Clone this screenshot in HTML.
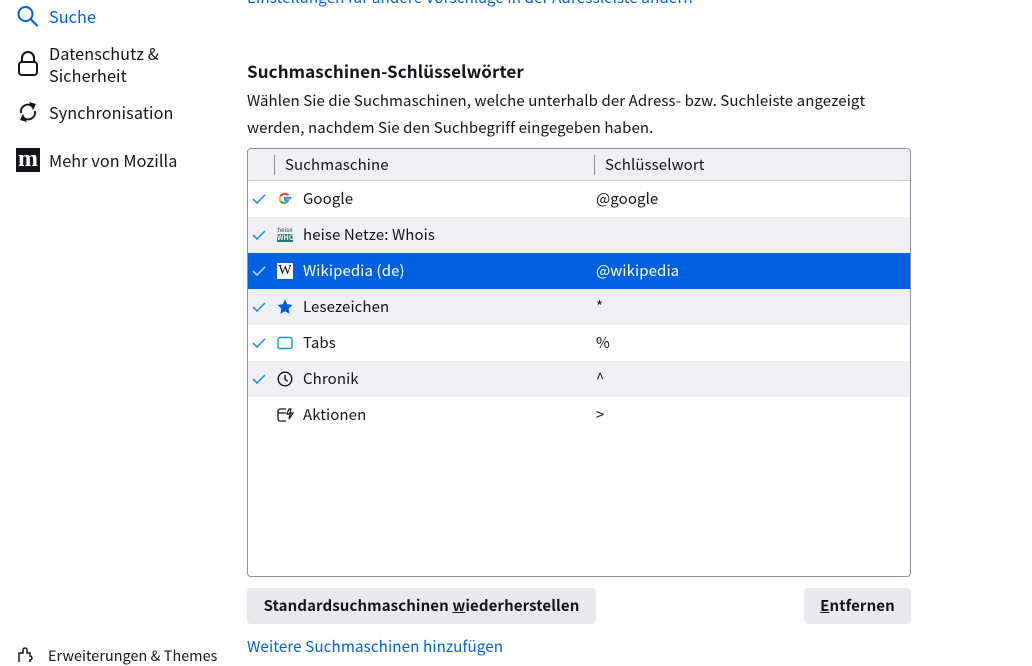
<!DOCTYPE html>
<html><head><meta charset="utf-8"><style>
*{margin:0;padding:0;box-sizing:border-box}
body{width:1032px;height:660px;overflow:hidden;background:#fff;font-family:"Noto Sans CJK SC","Liberation Sans",sans-serif;font-size:15px;color:#15141a;position:relative;letter-spacing:0.1px}
.a{position:absolute;white-space:nowrap}
.nav{font-size:16.2px;line-height:22px}
.blue{color:#0061e0}
.tbl{position:absolute;left:247px;top:148px;width:664px;height:429px;border:1px solid #8f8f9d;border-radius:4px;overflow:hidden}
.hd{height:32px;background:#f0f0f4;border-bottom:1px solid #cfcfd8;position:relative}
.row{height:36px;position:relative}
.row.g{background:#f0f0f4}
.row.sel{background:#0061e0;color:#fff}
.row span,.hd span{position:absolute;top:0;line-height:36px}
.hd span{line-height:31px}
.chk{left:3px;top:0;position:absolute}
.btn{position:absolute;background:#e9e9ed;border-radius:4px;font-weight:bold;font-size:15px;text-align:center;line-height:36px;height:36px}
</style></head><body>
<div class="a blue" style="left:247px;top:-13px;font-size:15.2px;line-height:20px">Einstellungen für andere Vorschläge in der Adressleiste ändern</div>

<svg class="a" style="left:16px;top:5px" width="24" height="22" viewBox="0 0 24 22"><circle cx="9.5" cy="9" r="7" fill="none" stroke="#0061e0" stroke-width="2"/><line x1="14.5" y1="14" x2="21" y2="20.5" stroke="#0061e0" stroke-width="2.2" stroke-linecap="round"/></svg>
<div class="a nav blue" style="left:49px;top:5px">Suche</div>

<svg class="a" style="left:17px;top:51px" width="22" height="26" viewBox="0 0 22 26"><path d="M5 11V7a6 6 0 0 1 12 0v4" fill="none" stroke="#15141a" stroke-width="2"/><rect x="2" y="11" width="18" height="13" rx="3" fill="none" stroke="#15141a" stroke-width="2"/></svg>
<div class="a nav" style="left:49px;top:42px">Datenschutz &amp;</div>
<div class="a nav" style="left:49px;top:64px">Sicherheit</div>

<svg class="a" style="left:17px;top:100px" width="22" height="24" viewBox="0 0 22 24"><path d="M4 13A7 7 0 0 1 15 6" fill="none" stroke="#15141a" stroke-width="2"/><path d="M18 11A7 7 0 0 1 7 18" fill="none" stroke="#15141a" stroke-width="2"/><path d="M12 2l7 2-3 6z" fill="#15141a"/><path d="M10 22l-7-2 3-6z" fill="#15141a"/></svg>
<div class="a nav" style="left:49px;top:101px">Synchronisation</div>

<div class="a" style="left:16px;top:148px;width:24px;height:24px;background:#15141a;color:#fff;font-family:'Liberation Serif',serif;font-weight:bold;font-size:24px;line-height:22px;text-align:center">m</div>
<div class="a nav" style="left:49px;top:149px">Mehr von Mozilla</div>

<svg class="a" style="left:17px;top:646px" width="18" height="16" viewBox="0 0 18 16"><path d="M2 16V7h4V4a2 2 0 0 1 4 0v3h3v3a2 2 0 0 1 0 4v2" fill="none" stroke="#15141a" stroke-width="1.5"/></svg>
<div class="a" style="left:48px;top:647px;font-size:14.3px;line-height:18px">Erweiterungen &amp; Themes</div>

<div class="a" style="left:247px;top:59px;font-size:17px;font-weight:bold;line-height:24px">Suchmaschinen-Schlüsselwörter</div>
<div class="a" style="left:247px;top:90px;font-size:15px;line-height:22px">Wählen Sie die Suchmaschinen, welche unterhalb der Adress- bzw. Suchleiste angezeigt</div>
<div class="a" style="left:247px;top:117px;font-size:15px;line-height:22px">werden, nachdem Sie den Suchbegriff eingegeben haben.</div>

<div class="tbl">
<div class="hd"><div class="a" style="left:26px;top:6px;width:1px;height:20px;background:#8f8f9d"></div><span style="left:37px">Suchmaschine</span><div class="a" style="left:346px;top:6px;width:1px;height:20px;background:#8f8f9d"></div><span style="left:357px">Schlüsselwort</span></div>
<div class="row"><svg class="chk" width="16" height="36"><path d="M2 18l4 4 8-8" fill="none" stroke="#0a84ff" stroke-width="1.4"/></svg>
<svg class="a" style="left:30px;top:11px" width="14" height="14" viewBox="0 0 14 14"><path d="M12.5 7.2c0-.5 0-.9-.1-1.3H7v2.4h3.2a3 3 0 0 1-1.2 1.8" fill="none" stroke="#4285f4" stroke-width="2"/><path d="M2.5 9.3A5 5 0 0 0 9 10.1" fill="none" stroke="#34a853" stroke-width="2"/><path d="M2.3 4.5a5 5 0 0 0 .2 4.8" fill="none" stroke="#fbbc05" stroke-width="2"/><path d="M10.4 3.4A5 5 0 0 0 2.3 4.5" fill="none" stroke="#ea4335" stroke-width="2"/></svg>
<span style="left:55px">Google</span><span style="left:348px">@google</span></div>
<div class="row g"><svg class="chk" width="16" height="36"><path d="M2 18l4 4 8-8" fill="none" stroke="#0a84ff" stroke-width="1.4"/></svg>
<div class="a" style="left:29px;top:9px;width:16px;height:18px;font-size:6px;line-height:8px;color:#333;text-align:center">heise</div><div class="a" style="left:29px;top:17px;width:16px;height:8px;background:#1a7a7a;color:#fff;font-size:7px;line-height:8px;text-align:center;font-weight:bold">WHO</div>
<span style="left:55px">heise Netze: Whois</span></div>
<div class="row sel"><svg class="chk" width="16" height="36"><path d="M2 18l4 4 8-8" fill="none" stroke="#cfe3ff" stroke-width="1.4"/></svg>
<div class="a" style="left:29px;top:10px;width:16px;height:16px;background:#fff;color:#000;font-family:'Liberation Serif',serif;font-size:14px;line-height:16px;text-align:center">W</div>
<span style="left:55px">Wikipedia (de)</span><span style="left:348px">@wikipedia</span></div>
<div class="row g"><svg class="chk" width="16" height="36"><path d="M2 18l4 4 8-8" fill="none" stroke="#0a84ff" stroke-width="1.4"/></svg>
<svg class="a" style="left:29px;top:10px" width="16" height="16" viewBox="0 0 16 16"><path d="M8 .5l2.3 4.8 5.2.7-3.8 3.6.9 5.2L8 12.3 3.4 14.8l.9-5.2L.5 6l5.2-.7z" fill="#0061e0"/></svg>
<span style="left:55px">Lesezeichen</span><span style="left:348px">*</span></div>
<div class="row"><svg class="chk" width="16" height="36"><path d="M2 18l4 4 8-8" fill="none" stroke="#0a84ff" stroke-width="1.4"/></svg>
<svg class="a" style="left:29px;top:11px" width="16" height="14" viewBox="0 0 16 14"><rect x="1" y="1.5" width="14" height="11" rx="2" fill="none" stroke="#0a9dc7" stroke-width="1.4"/></svg>
<span style="left:55px">Tabs</span><span style="left:348px">%</span></div>
<div class="row g"><svg class="chk" width="16" height="36"><path d="M2 18l4 4 8-8" fill="none" stroke="#0a84ff" stroke-width="1.4"/></svg>
<svg class="a" style="left:29px;top:10px" width="16" height="16" viewBox="0 0 16 16"><circle cx="8" cy="8" r="6.8" fill="none" stroke="#15141a" stroke-width="1.4"/><path d="M8 4v4.3l2.6 2" fill="none" stroke="#15141a" stroke-width="1.4"/></svg>
<span style="left:55px">Chronik</span><span style="left:348px">^</span></div>
<div class="row">
<svg class="a" style="left:29px;top:10px" width="17" height="16" viewBox="0 0 17 16"><path d="M9 14H3a2 2 0 0 1-2-2V4a2 2 0 0 1 2-2h6M1 6h8" fill="none" stroke="#15141a" stroke-width="1.3"/><path d="M12 2l-2 5h3l-1 5 4-6h-3l1-4z" fill="none" stroke="#15141a" stroke-width="1.2"/></svg>
<span style="left:55px">Aktionen</span><span style="left:348px">&gt;</span></div>
</div>

<div class="btn" style="left:247px;top:588px;width:349px">Standardsuchmaschinen <u>w</u>iederherstellen</div>
<div class="btn" style="left:804px;top:588px;width:107px"><u>E</u>ntfernen</div>
<div class="a blue" style="left:247px;top:635px;font-size:15.2px;line-height:22px">Weitere Suchmaschinen hinzufügen</div>
</body></html>
